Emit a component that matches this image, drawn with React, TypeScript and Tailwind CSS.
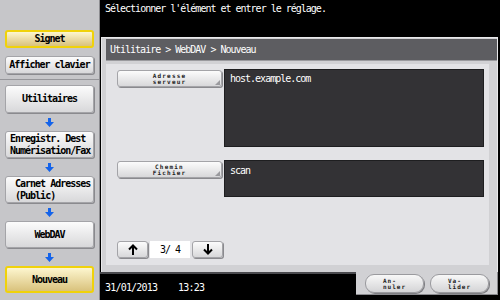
const mono = "font-['DejaVu_Sans_Mono',monospace]";

const whiteBtn =
  "rounded-[3px] border border-[#a4a4a8] bg-linear-to-b from-[#fcfcfc] to-[#d8d8da] shadow-[1px_1px_0_#8a8a8e]";
const yellowBtn =
  "rounded-[3px] border-2 border-[#f0d20a] bg-linear-to-b from-[#fdf6cf] to-[#d9c27c]";

const BlueArrow = () => (
  <div className="h-[18px] flex items-center justify-center">
    <svg width="9" height="9" viewBox="0 0 9 9">
      <path d="M3 0h3v4h3L4.5 9 0 4h3z" fill="#1463ea" />
    </svg>
  </div>
);

const SideBtn = ({ children, h = 'h-[27px]', yellow = false, left = false }: { children: React.ReactNode; h?: string; yellow?: boolean; left?: boolean }) => (
  <div
    className={`${h} ${yellow ? yellowBtn : whiteBtn} flex flex-col justify-center ${left ? 'items-start pl-[4px]' : 'items-center'} text-[10px] leading-[12px] tracking-[-1px] font-bold text-black whitespace-pre`}
  >
    {children}
  </div>
);

const LabelBtn = ({ a, b }: { a: string; b: string }) => (
  <div className={`relative w-[105px] h-[17px] ${whiteBtn} flex flex-col items-center justify-center text-[6px] leading-[6px] tracking-[1.2px] font-bold text-[#222]`}>
    <span>{a}</span>
    <span>{b}</span>
    <svg className="absolute right-[1px] bottom-[1px]" width="5" height="5" viewBox="0 0 5 5">
      <path d="M5 0v5H0z" fill="#9a9a9e" />
    </svg>
  </div>
);

const Arrow = ({ up }: { up?: boolean }) => (
  <div className={`w-[31px] h-[17px] ${whiteBtn} flex items-center justify-center`}>
    <svg width="10" height="11" viewBox="0 0 10 11">
      {up ? (
        <path d="M5 1.5V11M1 5.5l4-4 4 4" stroke="black" strokeWidth="2" fill="none" />
      ) : (
        <path d="M5 0v9.5M1 5.5l4 4 4-4" stroke="black" strokeWidth="2" fill="none" />
      )}
    </svg>
  </div>
);

const RoundBtn = ({ a, b }: { a: string; b: string }) => (
  <div className="w-[59px] h-[19px] rounded-[9px] border border-[#9a9a9e] bg-linear-to-b from-[#f8f8f8] to-[#d4d4d6] shadow-[1px_1px_0_#7e7e82] flex flex-col justify-center pl-[17px] text-[6px] leading-[6px] tracking-[1px] font-bold text-[#222]">
    <span>{a}</span>
    <span>{b}</span>
  </div>
);

export default function App() {
  return (
    <div className={`w-[500px] h-[300px] flex bg-black overflow-hidden ${mono}`}>
      <aside className="w-[100px] bg-[#c6c6c9] border-r border-[#8c8c90] flex flex-col">
        <div className="h-[80px] px-[5px] pt-[30px] flex flex-col gap-[8px] border-b border-[#96969a]">
          <SideBtn h="h-[18px]" yellow>Signet</SideBtn>
          <SideBtn h="h-[18px]">Afficher clavier</SideBtn>
        </div>
        <div className="px-[5px] pt-[5px] flex flex-col">
          <SideBtn h="h-[28px]">Utilitaires</SideBtn>
          <BlueArrow />
          <SideBtn left>{'Enregistr. Dest\nNumérisation/Fax'}</SideBtn>
          <BlueArrow />
          <SideBtn left>{' Carnet Adresses\n (Public)'}</SideBtn>
          <BlueArrow />
          <SideBtn>WebDAV</SideBtn>
          <BlueArrow />
          <SideBtn yellow>Nouveau</SideBtn>
        </div>
      </aside>

      <main className="flex-1 flex flex-col">
        <header className="h-[37px] pl-[5px] pt-[3px] text-white text-[10px] leading-[12px] tracking-[-1px]">
          Sélectionner l'élément et entrer le réglage.
        </header>

        <section className="ml-[1px] mr-[2px] h-[235px] bg-[#d1d1d4] border-t border-l border-r border-[#e8e8ea] flex flex-col">
          <div className="ml-[4px] mt-[1px] h-[22px] bg-[#5d5d61] border-b border-[#9a9a9e] flex items-center pl-[4px] text-white text-[10px] tracking-[-1px]">
            Utilitaire &gt; WebDAV &gt; Nouveau
          </div>
          <div className="ml-[4px] mr-[8px] mt-[3px] h-[201px] bg-[#e3e3e6] pl-[11px] pt-[5px] flex flex-col">
            <div className="flex gap-[2px] items-start">
              <div className="pt-[1px]">
                <LabelBtn a="Adresse" b="serveur" />
              </div>
              <div className="w-[260px] h-[78px] bg-[#333235] border border-[#1e1e20] pl-[5px] pt-[3px] text-white text-[10px] leading-[12px] tracking-[-1px]">
                host.example.com
              </div>
            </div>
            <div className="mt-[13px] flex gap-[2px] items-start">
              <div className="pt-[1px]">
                <LabelBtn a="Chemin" b="Fichier" />
              </div>
              <div className="w-[260px] h-[37px] bg-[#333235] border border-[#1e1e20] pl-[5px] pt-[4px] text-white text-[10px] leading-[12px] tracking-[-1px]">
                scan
              </div>
            </div>
            <div className="mt-[44px] flex items-center gap-[2px]">
              <Arrow up />
              <div className="w-[40px] h-[17px] bg-white flex items-center justify-center text-[10px] tracking-[-1px] text-black whitespace-pre">
                3/ 4
              </div>
              <Arrow />
            </div>
          </div>
        </section>

        <div className="flex h-[28px]">
          <div className="flex-1 border-t-2 border-[#4a4a4e] pl-[5px] pt-[8px] text-white text-[10px] leading-[12px] tracking-[-0.8px] whitespace-pre">
            31/01/2013    13:23
          </div>
          <div className="w-[142px] mr-[2px] h-[23px] bg-[#d1d1d4] border-r border-b border-[#8a8a8e] flex items-start gap-[6px] pl-[9px] pt-[2px]">
            <RoundBtn a="An-" b="nuler" />
            <RoundBtn a="Va-" b="lider" />
          </div>
        </div>
      </main>
    </div>
  );
}
